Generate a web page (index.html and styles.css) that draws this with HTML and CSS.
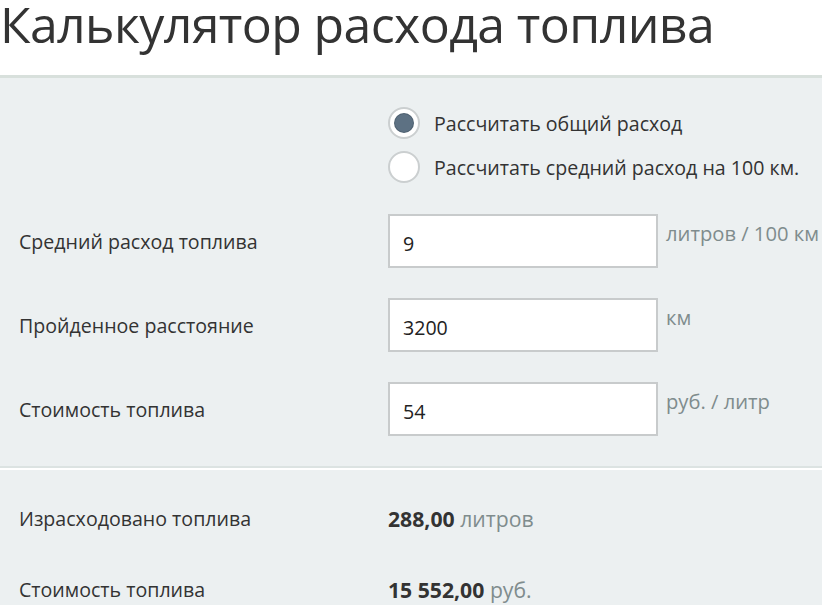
FILE: index.html
```html
<!DOCTYPE html>
<html lang="ru">
<head>
<meta charset="utf-8">
<title>Калькулятор расхода топлива</title>
<link rel="stylesheet" href="styles.css">
</head>
<body>
<h1 class="title">Калькулятор расхода топлива</h1>
<div class="panel panel-form">
  <div class="radios">
    <label class="radio-row"><span class="radio checked"></span><span class="radio-text">Рассчитать общий расход</span></label>
    <label class="radio-row"><span class="radio"></span><span class="radio-text">Рассчитать средний расход на 100 км.</span></label>
  </div>
  <div class="rows">
    <div class="row">
      <div class="label">Средний расход топлива</div>
      <div class="input">9</div>
      <div class="unit">литров / 100 км</div>
    </div>
    <div class="row">
      <div class="label">Пройденное расстояние</div>
      <div class="input">3200</div>
      <div class="unit">км</div>
    </div>
    <div class="row">
      <div class="label">Стоимость топлива</div>
      <div class="input">54</div>
      <div class="unit">руб. / литр</div>
    </div>
  </div>
</div>
<div class="panel panel-result">
  <div class="res-row">
    <div class="label">Израсходовано топлива</div>
    <div class="value"><b>288,00</b> <span class="unit-inline">литров</span></div>
  </div>
  <div class="res-row">
    <div class="label">Стоимость топлива</div>
    <div class="value"><b>15 552,00</b> <span class="unit-inline">руб.</span></div>
  </div>
</div>
</body>
</html>
```
FILE: styles.css
```css
html, body {
  margin: 0;
  padding: 0;
  background: #ffffff;
}
body {
  font-family: "Open Sans", "Liberation Sans", sans-serif;
  color: #333333;
  overflow: hidden;
}
.title {
  margin: 0;
  padding: 0;
  height: 75px;
  font-size: 50px;
  line-height: 48px;
  font-weight: 400;
  color: #333333;
  white-space: nowrap;
  letter-spacing: -0.6px;
}
.panel {
  background: #ecf0f1;
}
.panel-form {
  border-top: 3px solid #d8e0dc;
  border-bottom: 2px solid #dce3e2;
  padding: 29px 0 30px;
}
.radios {
  margin-left: 388px;
  display: flex;
  flex-direction: column;
  gap: 12px;
}
.radio-row {
  display: flex;
  align-items: center;
  gap: 14px;
  height: 32px;
}
.radio {
  box-sizing: border-box;
  width: 32px;
  height: 32px;
  border-radius: 50%;
  background: #ffffff;
  border: 2px solid #cbcfd0;
  display: flex;
  align-items: center;
  justify-content: center;
}
.radio.checked::after {
  content: "";
  width: 18px;
  height: 18px;
  border-radius: 50%;
  background: #5d7183;
  box-shadow: 0 0 0 1px #4e6070;
}
.radio-text {
  font-size: 19.6px;
  color: #333333;
}
.rows {
  margin-top: 31px;
  display: flex;
  flex-direction: column;
  gap: 30px;
}
.row {
  display: grid;
  grid-template-columns: 388px 270px 1fr;
  height: 54px;
}
.label {
  padding-left: 19px;
  font-size: 19.6px;
  align-self: center;
  color: #333333;
}
.input {
  box-sizing: border-box;
  height: 54px;
  background: #ffffff;
  border: 2px solid #c8cbcc;
  padding: 4px 13px 0;
  display: flex;
  align-items: center;
  font-size: 19.6px;
  color: #222222;
}
.unit {
  padding-left: 8px;
  padding-top: 4px;
  font-size: 20.2px;
  line-height: 30px;
  color: #7f8c8d;
  white-space: nowrap;
}
.panel-result {
  margin-top: 2px;
  padding: 33px 0 20px;
  display: flex;
  flex-direction: column;
  gap: 41px;
}
.res-row {
  display: grid;
  grid-template-columns: 388px 1fr;
  height: 30px;
  align-items: center;
}
.value {
  font-size: 21.2px;
  color: #333333;
}
.value b {
  font-weight: 700;
}
.unit-inline {
  color: #7f8c8d;
  font-weight: 400;
}
```
